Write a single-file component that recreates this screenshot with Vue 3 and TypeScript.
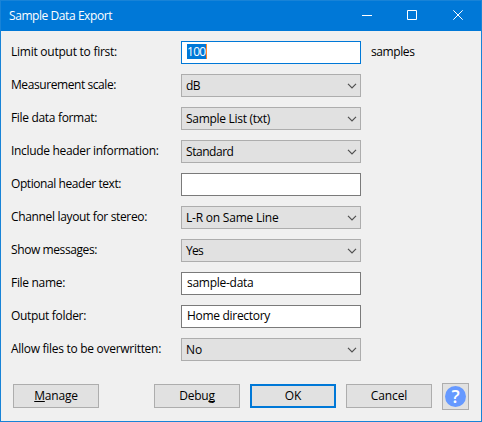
<script setup lang="ts">
interface Field {
  label: string
  labelWidth: number
  kind: 'text' | 'choice'
  value: string
  valueWidth: number
  selected?: boolean
  unit?: string
}

interface Action {
  before: string
  key: string
  after: string
  width: number
  kind: string
}

const fields: Field[] = [
  { label: 'Limit output to first:', labelWidth: 106, kind: 'text', value: '100', valueWidth: 19.5, selected: true, unit: 'samples' },
  { label: 'Measurement scale:', labelWidth: 105, kind: 'choice', value: 'dB', valueWidth: 14 },
  { label: 'File data format:', labelWidth: 86, kind: 'choice', value: 'Sample List (txt)', valueWidth: 84 },
  { label: 'Include header information:', labelWidth: 147.5, kind: 'choice', value: 'Standard', valueWidth: 47.5 },
  { label: 'Optional header text:', labelWidth: 110, kind: 'text', value: '', valueWidth: 0 },
  { label: 'Channel layout for stereo:', labelWidth: 136, kind: 'choice', value: 'L-R on Same Line', valueWidth: 92.5 },
  { label: 'Show messages:', labelWidth: 86, kind: 'choice', value: 'Yes', valueWidth: 17 },
  { label: 'File name:', labelWidth: 54, kind: 'text', value: 'sample-data', valueWidth: 66.5 },
  { label: 'Output folder:', labelWidth: 75, kind: 'text', value: 'Home directory', valueWidth: 83 },
  { label: 'Allow files to be overwritten:', labelWidth: 150, kind: 'choice', value: 'No', valueWidth: 16 },
]

const actions: Action[] = [
  { before: '', key: 'M', after: 'anage', width: 43.5, kind: 'manage' },
  { before: 'Debu', key: 'g', after: '', width: 35.5, kind: 'debug' },
  { before: 'OK', key: '', after: '', width: 16.5, kind: 'primary' },
  { before: 'Cancel', key: '', after: '', width: 36.5, kind: 'cancel' },
]

// Tracks a caption so that it occupies the given number of pixels.
const vFit = {
  mounted(el: HTMLElement, binding: { value: number }) {
    const count = (el.textContent ?? '').length
    if (!count || !binding.value) return
    const natural = el.getBoundingClientRect().width
    el.style.letterSpacing = `${(binding.value - natural) / count}px`
  },
}
</script>

<template>
  <main class="dialog">
    <header class="titlebar">
      <h1 class="title"><span v-fit="103">Sample Data Export</span></h1>
      <div class="controls">
        <svg class="glyph minimize" viewBox="0 0 10 10"><path d="M0 5.5H10" /></svg>
        <svg class="glyph" viewBox="0 0 10 10"><path d="M.5 .5H9.5V9.5H.5Z" /></svg>
        <svg class="glyph" viewBox="0 0 10 10"><path d="M.3 .3L9.7 9.7M9.7 .3L.3 9.7" /></svg>
      </div>
    </header>

    <section class="form">
      <div v-for="field in fields" :key="field.label" class="row">
        <div class="label"><span v-fit="field.labelWidth">{{ field.label }}</span></div>
        <div class="box" :class="[field.kind, { focused: field.selected }]">
          <span v-fit="field.valueWidth" :class="{ selection: field.selected }">{{ field.value }}</span>
          <svg v-if="field.kind === 'choice'" class="chevron" viewBox="0 0 10 6">
            <path d="M1 .8L5 4.8L9 .8" />
          </svg>
        </div>
        <div v-if="field.unit" class="unit"><span v-fit="43.5">{{ field.unit }}</span></div>
      </div>
    </section>

    <footer class="actions">
      <button v-for="action in actions" :key="action.kind" type="button" class="button" :class="action.kind">
        <span v-fit="action.width">{{ action.before }}<span class="key">{{ action.key }}</span>{{ action.after }}</span>
      </button>
      <button type="button" class="help">
        <span class="disc">?</span>
      </button>
    </footer>
  </main>
</template>

<style>
body {
  margin: 0;
  overflow: hidden;
}
</style>

<style scoped>
.dialog {
  box-sizing: border-box;
  width: 482px;
  height: 422px;
  border: 1px solid #1883d7;
  background: #f0f0f0;
  color: #000;
  font: 12px/16px "Open Sans", "Noto Sans", sans-serif;
  white-space: nowrap;
}

.titlebar {
  display: flex;
  align-items: center;
  justify-content: space-between;
  height: 30px;
  padding: 0 18px 0 8px;
  background: #0078d7;
  color: #fff;
}

.title {
  margin: 0;
  font-size: 12px;
  font-weight: 400;
}

.controls {
  display: flex;
  gap: 36px;
  padding-bottom: 2px;
}

.glyph {
  width: 10px;
  height: 10px;
  fill: none;
  stroke: #fff;
  stroke-width: 1;
}

.minimize {
  margin-right: -1px;
}

.form {
  display: flex;
  flex-direction: column;
  gap: 10px;
  padding: 10px 0 0 10px;
}

.row {
  display: flex;
  height: 23px;
}

.label {
  width: 170px;
  padding-top: 3px;
}

.box {
  box-sizing: border-box;
  display: flex;
  align-items: flex-start;
  justify-content: space-between;
  width: 180px;
  height: 23px;
}

.text {
  padding: 2px 5px;
  border: 1px solid #7a7a7a;
  background: #fff;
}

.choice {
  padding: 3px 3px 3px 4px;
  border: 1px solid #adadad;
  background: #e1e1e1;
}

.focused {
  border-color: #0078d7;
}

.selection {
  height: 15px;
  border-right: 1px solid #ff8728;
  background: #0078d7;
  color: #fff;
}

.chevron {
  width: 10px;
  height: 6px;
  margin-top: 5px;
  fill: none;
  stroke: #505050;
  stroke-width: 1.2;
}

.unit {
  padding: 3px 0 0 10px;
}

.actions {
  display: flex;
  align-items: flex-start;
  gap: 10px;
  padding: 22px 0 0 12px;
}

.button {
  box-sizing: border-box;
  width: 86px;
  height: 24px;
  margin-top: 1px;
  padding: 0;
  border: 1px solid #adadad;
  background: #e1e1e1;
  color: #000;
  font: inherit;
}

.manage {
  margin-right: 45px;
}

.primary {
  border: 2px solid #0078d7;
}

.key {
  text-decoration: underline;
  text-decoration-skip-ink: none;
  text-underline-offset: 1px;
}

.help {
  box-sizing: border-box;
  display: flex;
  align-items: center;
  justify-content: center;
  width: 27px;
  height: 27px;
  padding: 0;
  border: 1px solid #adadad;
  background: #e1e1e1;
}

.disc {
  width: 21px;
  height: 21px;
  border-radius: 50%;
  background: #6699ff;
  color: #fff;
  font: 600 18px/20px "Open Sans", sans-serif;
  text-align: center;
}
</style>
